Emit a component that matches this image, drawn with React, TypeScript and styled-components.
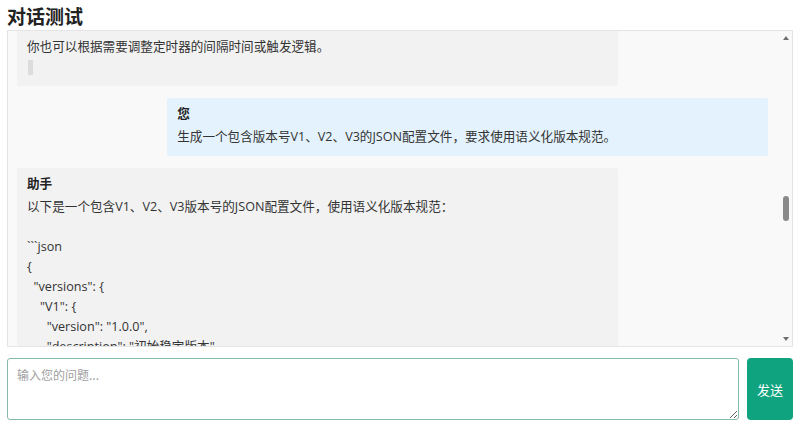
import React, { useLayoutEffect, useRef, useState } from 'react'
import styled, { createGlobalStyle } from 'styled-components'

const GlobalStyle = createGlobalStyle`
  html, body {
    margin: 0;
    padding: 0;
    background: #ffffff;
    overflow: hidden;
  }
  body {
    font-family: "Segoe UI", "Open Sans", "Noto Sans CJK SC", sans-serif;
    color: #333333;
  }
`

const Page = styled.div`
  width: 800px;
  box-sizing: border-box;
  padding: 4px 7px 0;
`

const Title = styled.h2`
  margin: 0 0 2px;
  font-size: 19px;
  line-height: 24px;
  font-weight: 700;
  color: #222222;
  font-family: "Segoe UI", "Noto Sans CJK SC", sans-serif;
`

const ChatFrame = styled.div`
  height: 317px;
  box-sizing: border-box;
  border: 1px solid #e4e4e4;
  background: #f9f9f9;
  display: flex;
`

const ChatScroll = styled.div`
  flex: 1;
  min-width: 0;
  padding: 10px 12px 10px 9px;
  overflow-y: auto;
  display: flex;
  flex-direction: column;
  scrollbar-width: none;

  &::-webkit-scrollbar {
    display: none;
  }
`

const ScrollBar = styled.div`
  width: 12px;
  flex: none;
  display: flex;
  flex-direction: column;
  background: #f9f9f9;
`

const Arrow = styled.div<{ $dir: 'up' | 'down' }>`
  height: 14px;
  flex: none;
  display: flex;
  align-items: center;
  justify-content: center;

  &::after {
    content: '';
    width: 0;
    height: 0;
    border-left: 3.5px solid transparent;
    border-right: 3.5px solid transparent;
    ${({ $dir }) =>
      $dir === 'up' ? 'border-bottom: 4px solid #6f6f6f;' : 'border-top: 4px solid #6f6f6f;'}
  }
`

const Track = styled.div`
  flex: 1;
  position: relative;
`

const Thumb = styled.div`
  position: absolute;
  left: 3px;
  width: 6px;
  border-radius: 3px;
  background: #8a8a8a;
`

const Bubble = styled.div<{ $role: 'user' | 'assistant' }>`
  flex: none;
  width: 80%;
  box-sizing: border-box;
  margin-bottom: 12px;
  padding: 9px 10px;
  border-radius: 2px;
  align-self: ${({ $role }) => ($role === 'user' ? 'flex-end' : 'flex-start')};
  background: ${({ $role }) => ($role === 'user' ? '#e3f2fd' : '#f2f2f2')};
  font-size: 12.6px;
`

const Sender = styled.div`
  font-weight: 700;
  line-height: 14px;
  margin-bottom: 6px;
  color: #222222;
`

const Body = styled.div`
  white-space: pre-wrap;
  line-height: 20px;
  color: #333333;
`

const Cursor = styled.span`
  display: block;
  width: 5px;
  height: 15px;
  margin: 3px 0 2px 1px;
  background: #dcdcdc;
`

const InputRow = styled.div`
  display: flex;
  gap: 8px;
  height: 62px;
  margin-top: 11px;
`

const Input = styled.textarea`
  flex: 1;
  box-sizing: border-box;
  padding: 8px 9px;
  border: 1px solid #86b9ad;
  border-radius: 3px;
  font-family: "Segoe UI", "Noto Sans CJK SC", sans-serif;
  font-size: 12px;
  line-height: 16px;
  color: #333333;
  resize: vertical;
  outline: none;

  &::placeholder {
    color: #a0a0a0;
  }
`

const SendButton = styled.button`
  width: 46px;
  border: none;
  border-radius: 4px;
  background: #10a37f;
  color: #ffffff;
  font-family: "Segoe UI", "Noto Sans CJK SC", sans-serif;
  font-size: 13px;
  cursor: pointer;
`

type Msg = { role: 'user' | 'assistant'; text: string; cursor?: boolean }

const FENCE = '```'

const messages: Msg[] = [
  { role: 'user', text: '你好，请介绍一下你自己。' },
  {
    role: 'assistant',
    text: [
      '你好！我是一个AI助手，可以帮助你完成以下工作：',
      '',
      '1. 回答各类知识性问题；',
      '2. 编写、解释和调试代码；',
      '3. 生成配置文件、文档和示例数据；',
      '4. 翻译、润色和总结文本内容；',
      '5. 协助进行方案设计和问题分析。',
      '',
      '如果有任何需要，请直接告诉我。',
    ].join('\n'),
  },
  { role: 'user', text: '你可以使用哪些编程语言？' },
  {
    role: 'assistant',
    text: [
      '我可以使用多种常见的编程语言，例如：',
      '',
      '- JavaScript / TypeScript',
      '- Python',
      '- Java',
      '- Go',
      '- C / C++',
      '- SQL',
      '',
      '你可以告诉我具体的需求，我会选择合适的语言来实现。',
    ].join('\n'),
  },
  { role: 'user', text: '用JavaScript写一个定时器，每隔5秒在控制台输出当前时间。' },
  {
    role: 'assistant',
    cursor: true,
    text: [
      '好的，下面是一个使用JavaScript实现的定时器示例，每隔5秒在控制台输出一次当前时间：',
      '',
      FENCE + 'javascript',
      '// 格式化时间，补齐两位数',
      'function pad(num) {',
      "  return String(num).padStart(2, '0');",
      '}',
      '',
      'function formatTime(date) {',
      '  const h = pad(date.getHours());',
      '  const m = pad(date.getMinutes());',
      '  const s = pad(date.getSeconds());',
      '  return `${h}:${m}:${s}`;',
      '}',
      '',
      '// 每隔5秒执行一次',
      'const timerId = setInterval(() => {',
      '  const now = new Date();',
      "  console.log('当前时间：' + formatTime(now));",
      '}, 5000);',
      '',
      '// 如果需要在一段时间后停止定时器',
      'setTimeout(() => {',
      '  clearInterval(timerId);',
      "  console.log('定时器已停止');",
      '}, 60000);',
      FENCE,
      '',
      '### 代码说明',
      '',
      '1. `setInterval` 用于按固定的时间间隔重复执行回调函数，第二个参数的单位是毫秒。',
      '2. `formatTime` 函数将 Date 对象格式化为 `HH:mm:ss` 的形式。',
      '3. `setInterval` 会返回一个定时器 ID，调用 `clearInterval` 即可停止。',
      '4. 示例中的 `setTimeout` 会在 60 秒后自动停止定时器。',
      '',
      '### 在 Node.js 中运行',
      '',
      '将代码保存为 `timer.js`，然后在终端执行：',
      '',
      FENCE + 'bash',
      'node timer.js',
      FENCE,
      '',
      '### 使用 async/await 的写法',
      '',
      '如果希望每次执行之间等待异步任务完成，可以使用递归的 `setTimeout`：',
      '',
      FENCE + 'javascript',
      'const sleep = (ms) => new Promise((resolve) => setTimeout(resolve, ms));',
      '',
      'async function run() {',
      '  while (true) {',
      "    console.log('当前时间：' + formatTime(new Date()));",
      '    await sleep(5000);',
      '  }',
      '}',
      '',
      'run();',
      FENCE,
      '',
      '这种写法可以避免上一次任务尚未结束时下一次任务就开始执行的问题。',
      '',
      '你也可以根据需要调整定时器的间隔时间或触发逻辑。',
    ].join('\n'),
  },
  { role: 'user', text: '生成一个包含版本号V1、V2、V3的JSON配置文件，要求使用语义化版本规范。' },
  {
    role: 'assistant',
    text: [
      '以下是一个包含V1、V2、V3版本号的JSON配置文件，使用语义化版本规范：',
      '',
      FENCE + 'json',
      '{',
      '  "versions": {',
      '    "V1": {',
      '      "version": "1.0.0",',
      '      "description": "初始稳定版本",',
      '      "releaseDate": "2023-01-15",',
      '      "status": "deprecated",',
      '      "features": [',
      '        "基础用户认证",',
      '        "数据查询接口",',
      '        "日志记录"',
      '      ]',
      '    },',
      '    "V2": {',
      '      "version": "2.1.3",',
      '      "description": "功能增强版本",',
      '      "releaseDate": "2023-08-20",',
      '      "status": "stable",',
      '      "features": [',
      '        "OAuth 2.0 登录",',
      '        "批量数据导出",',
      '        "性能优化"',
      '      ]',
      '    },',
      '    "V3": {',
      '      "version": "3.0.0-beta.1",',
      '      "description": "重大架构升级（预发布）",',
      '      "releaseDate": "2024-03-01",',
      '      "status": "beta",',
      '      "features": [',
      '        "全新插件系统",',
      '        "GraphQL 接口",',
      '        "多租户支持"',
      '      ]',
      '    }',
      '  },',
      '  "current": "V2",',
      '  "latest": "V3"',
      '}',
      FENCE,
      '',
      '### 语义化版本说明',
      '',
      '版本号格式为 主版本号.次版本号.修订号（MAJOR.MINOR.PATCH）：',
      '',
      '1. 主版本号：做了不兼容的 API 修改时递增，例如 1.0.0 → 2.0.0；',
      '2. 次版本号：做了向下兼容的功能性新增时递增，例如 2.0.0 → 2.1.0；',
      '3. 修订号：做了向下兼容的问题修正时递增，例如 2.1.2 → 2.1.3；',
      '4. 先行版本号：可加在修订号之后，如 3.0.0-beta.1，表示版本尚不稳定。',
      '',
      '### 字段说明',
      '',
      '- `versions`：所有版本的详细信息，键名为版本代号；',
      '- `version`：符合语义化版本规范的版本号；',
      '- `description`：版本的简要描述；',
      '- `releaseDate`：发布日期，格式为 YYYY-MM-DD；',
      '- `status`：版本状态，可选值为 stable、beta、deprecated；',
      '- `features`：该版本包含的主要功能；',
      '- `current`：当前推荐使用的版本；',
      '- `latest`：最新发布的版本。',
      '',
      '### 读取配置示例',
      '',
      FENCE + 'javascript',
      "const config = require('./versions.json');",
      '',
      'const current = config.versions[config.current];',
      "console.log('当前版本：' + current.version);",
      '',
      'Object.entries(config.versions).forEach(([key, item]) => {',
      '  console.log(`${key}: ${item.version} (${item.status})`);',
      '});',
      FENCE,
      '',
      '你可以根据实际项目需要增删字段，例如添加 `changelog`、`downloadUrl` 等信息。',
    ].join('\n'),
  },
]

const App = () => {
  const boxRef = useRef<HTMLDivElement>(null)
  const anchorRef = useRef<HTMLDivElement>(null)
  const trackRef = useRef<HTMLDivElement>(null)
  const [thumb, setThumb] = useState({ top: 0, height: 0 })

  const updateThumb = () => {
    const box = boxRef.current
    const track = trackRef.current
    if (!box || !track) return
    const trackH = track.clientHeight
    const height = Math.max(20, (trackH * box.clientHeight) / box.scrollHeight)
    const range = box.scrollHeight - box.clientHeight
    const top = range > 0 ? (box.scrollTop / range) * (trackH - height) : 0
    setThumb({ top, height })
  }

  useLayoutEffect(() => {
    const box = boxRef.current
    const anchor = anchorRef.current
    if (!box || !anchor) return
    // keep the latest question at the same spot as in the screenshot
    const offset = anchor.getBoundingClientRect().top - box.getBoundingClientRect().top
    box.scrollTop += offset - 67
    updateThumb()
  }, [])

  return (
    <>
      <GlobalStyle />
      <Page>
        <Title>对话测试</Title>
        <ChatFrame>
          <ChatScroll ref={boxRef} onScroll={updateThumb}>
            {messages.map((m, i) => (
              <Bubble key={i} $role={m.role} ref={i === messages.length - 2 ? anchorRef : undefined}>
                <Sender>{m.role === 'user' ? '您' : '助手'}</Sender>
                <Body>{m.text}</Body>
                {m.cursor && <Cursor />}
              </Bubble>
            ))}
          </ChatScroll>
          <ScrollBar>
            <Arrow $dir="up" />
            <Track ref={trackRef}>
              <Thumb style={{ top: thumb.top, height: thumb.height }} />
            </Track>
            <Arrow $dir="down" />
          </ScrollBar>
        </ChatFrame>
        <InputRow>
          <Input placeholder="输入您的问题..." />
          <SendButton>发送</SendButton>
        </InputRow>
      </Page>
    </>
  )
}

export default App
